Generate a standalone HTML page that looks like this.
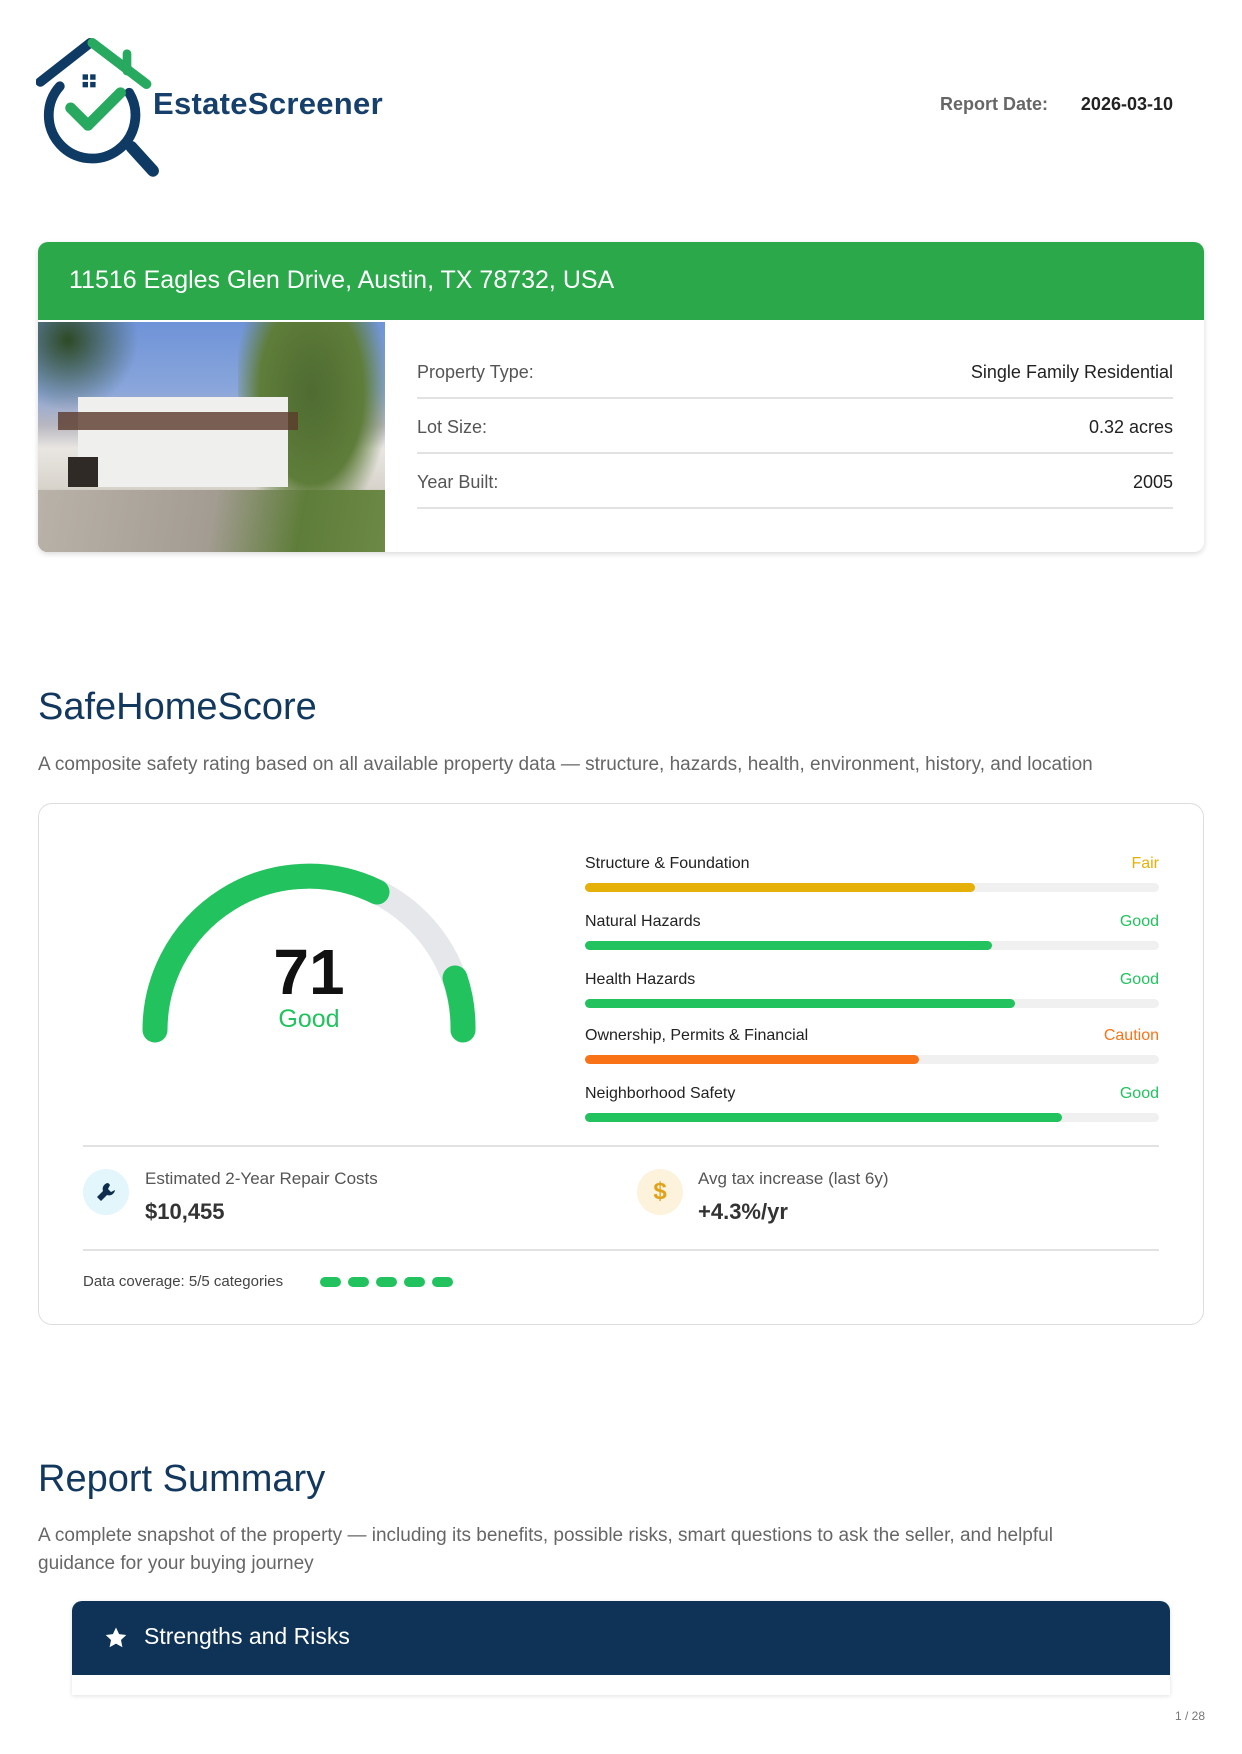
<!DOCTYPE html>
<html><head><meta charset="utf-8"><style>
*{margin:0;padding:0;box-sizing:border-box}
body{width:1242px;height:1754px;background:#fff;font-family:"Liberation Sans","DejaVu Sans",sans-serif;position:relative;overflow:hidden;color:#222}
.abs{position:absolute}
.row{position:absolute;left:417px;width:756px;height:55px;border-bottom:2px solid #e2e2e2;font-size:18px;color:#555}
.row span{position:absolute;bottom:14px}
.row .v{right:0;color:#222}
.lbl{position:absolute;left:585px;width:574px;font-size:16px;color:#222}
.lbl b{position:absolute;right:0;font-weight:normal}
.bar{position:absolute;left:585px;width:574px;height:9px;border-radius:5px;background:#f0f0f0}
.bar i{display:block;height:9px;border-radius:5px}
.dot{position:absolute;top:1277px;width:21px;height:10px;border-radius:5px;background:#22c35e}
</style></head><body>

<svg class="abs" style="left:36px;top:38px" width="130" height="142" viewBox="0 0 120 130">
 <path d="M4 40 L50 4" stroke="#0f3a63" stroke-width="9" stroke-linecap="round" fill="none"/>
 <path d="M52 4 L102 42" stroke="#27a95f" stroke-width="9" stroke-linecap="round" fill="none"/>
 <path d="M84 14 L84 30" stroke="#27a95f" stroke-width="8" stroke-linecap="round"/>
 <rect x="43" y="33" width="5" height="5" fill="#0f3a63"/><rect x="50" y="33" width="5" height="5" fill="#0f3a63"/>
 <rect x="43" y="40" width="5" height="5" fill="#0f3a63"/><rect x="50" y="40" width="5" height="5" fill="#0f3a63"/>
 <path d="M22 44 A40 40 0 1 0 86 50" stroke="#0f3a63" stroke-width="9" fill="none" stroke-linecap="round"/>
 <path d="M88 100 L108 122" stroke="#0f3a63" stroke-width="11" stroke-linecap="round"/>
 <path d="M32 64 L48 80 L78 50" stroke="#27a95f" stroke-width="10" fill="none" stroke-linecap="round" stroke-linejoin="round"/>
</svg>
<div class="abs" style="left:153px;top:86px;font-size:31px;font-weight:bold;color:#16406b;letter-spacing:0.3px">EstateScreener</div>
<div class="abs" style="left:940px;top:94px;font-size:18px;font-weight:bold;color:#666">Report Date:</div>
<div class="abs" style="right:69px;top:94px;font-size:18px;font-weight:bold;color:#222">2026-03-10</div>

<div class="abs" style="left:38px;top:242px;width:1166px;height:310px;border-radius:10px;box-shadow:0 2px 6px rgba(0,0,0,.15);background:#fff;overflow:hidden">
 <div style="height:78px;background:#2aa84a;color:#fff;font-size:25px;padding:24px 0 0 31px">11516 Eagles Glen Drive, Austin, TX 78732, USA</div>
 <div style="position:absolute;left:0;top:80px;width:347px;height:230px;background:linear-gradient(180deg,#6f93d8 0%,#8aa6db 30%,#b9b7c0 45%,#e9e6e2 55%,#d8d4cc 72%,#9a958b 82%,#6e7a5a 100%)">
  <div style="position:absolute;left:0;top:0;width:100px;height:90px;background:radial-gradient(circle at 30% 20%,#2e4a25,transparent 70%)"></div>
  <div style="position:absolute;left:200px;top:0;width:147px;height:200px;background:radial-gradient(ellipse at 50% 35%,#4f6b32 0%,#5f7d3a 50%,transparent 75%)"></div>
  <div style="position:absolute;left:40px;top:75px;width:210px;height:90px;background:#efefee"></div>
  <div style="position:absolute;left:20px;top:90px;width:240px;height:18px;background:#5b3b2c;opacity:.8"></div>
  <div style="position:absolute;left:30px;top:135px;width:30px;height:30px;background:#2f2a26"></div>
  <div style="position:absolute;left:0;top:168px;width:347px;height:62px;background:linear-gradient(100deg,#b9b2a8 0%,#a39c92 50%,#5f7d3a 75%,#6c8a45 100%)"></div>
 </div>
</div>
<div class="row" style="top:344px"><span>Property Type:</span><span class="v">Single Family Residential</span></div>
<div class="row" style="top:399px"><span>Lot Size:</span><span class="v">0.32 acres</span></div>
<div class="row" style="top:454px"><span>Year Built:</span><span class="v">2005</span></div>

<div class="abs" style="left:38px;top:686px;font-size:38px;color:#12385e">SafeHomeScore</div>
<div class="abs" style="left:38px;top:754px;font-size:19px;color:#666">A composite safety rating based on all available property data — structure, hazards, health, environment, history, and location</div>

<div class="abs" style="left:38px;top:803px;width:1166px;height:522px;border:1.5px solid #ddd;border-radius:14px"></div>
<svg class="abs" style="left:130px;top:850px" width="360" height="200" viewBox="130 850 360 200">
 <path d="M155 1030 A154 154 0 0 1 463 1030" stroke="#e5e7eb" stroke-width="25" fill="none" stroke-linecap="round"/>
 <path d="M155 1030 A154 154 0 0 1 377 892" stroke="#22c35e" stroke-width="25" fill="none" stroke-linecap="round"/>
 <path d="M455 978 A154 154 0 0 1 463 1030" stroke="#22c35e" stroke-width="25" fill="none" stroke-linecap="round"/>
</svg>
<div class="abs" style="left:209px;width:200px;text-align:center;top:935px;font-size:64px;font-weight:bold;color:#111">71</div>
<div class="abs" style="left:209px;width:200px;text-align:center;top:1005px;font-size:25px;color:#22c35e">Good</div>

<div class="lbl" style="top:855px">Structure &amp; Foundation<b style="color:#e5b008">Fair</b></div>
<div class="bar" style="top:883px"><i style="width:390px;background:#e5b008"></i></div>
<div class="lbl" style="top:913px">Natural Hazards<b style="color:#22c35e">Good</b></div>
<div class="bar" style="top:941px"><i style="width:407px;background:#22c35e"></i></div>
<div class="lbl" style="top:971px">Health Hazards<b style="color:#22c35e">Good</b></div>
<div class="bar" style="top:999px"><i style="width:430px;background:#22c35e"></i></div>
<div class="lbl" style="top:1027px">Ownership, Permits &amp; Financial<b style="color:#f97316">Caution</b></div>
<div class="bar" style="top:1055px"><i style="width:334px;background:#f97316"></i></div>
<div class="lbl" style="top:1085px">Neighborhood Safety<b style="color:#22c35e">Good</b></div>
<div class="bar" style="top:1113px"><i style="width:477px;background:#22c35e"></i></div>

<div class="abs" style="left:83px;top:1145px;width:1076px;height:2px;background:#e2e2e2"></div>
<div class="abs" style="left:83px;top:1169px;width:46px;height:46px;border-radius:50%;background:#e2f6fb"></div>
<svg class="abs" style="left:94px;top:1180px" width="24" height="24" viewBox="0 0 24 24"><path d="M14 3a6 6 0 0 0-5 8l-6 6 2 2-0 0 2 2 6-6a6 6 0 0 0 8-5l-4 2-3-3 2-4a6 6 0 0 0-2-2z" fill="#0f2e4e"/></svg>
<div class="abs" style="left:145px;top:1169px;font-size:17px;color:#555">Estimated 2-Year Repair Costs</div>
<div class="abs" style="left:145px;top:1199px;font-size:22px;font-weight:bold;color:#333">$10,455</div>
<div class="abs" style="left:637px;top:1169px;width:46px;height:46px;border-radius:50%;background:#fdf3dc;text-align:center;line-height:46px;font-size:24px;font-weight:bold;color:#e0a21a">$</div>
<div class="abs" style="left:698px;top:1169px;font-size:17px;color:#555">Avg tax increase (last 6y)</div>
<div class="abs" style="left:698px;top:1199px;font-size:22px;font-weight:bold;color:#333">+4.3%/yr</div>
<div class="abs" style="left:83px;top:1249px;width:1076px;height:2px;background:#e2e2e2"></div>
<div class="abs" style="left:83px;top:1273px;font-size:15px;color:#444">Data coverage: 5/5 categories</div>
<div class="dot" style="left:320px"></div><div class="dot" style="left:348px"></div><div class="dot" style="left:376px"></div><div class="dot" style="left:404px"></div><div class="dot" style="left:432px"></div>

<div class="abs" style="left:38px;top:1458px;font-size:38px;color:#12385e">Report Summary</div>
<div class="abs" style="left:38px;top:1522px;width:1075px;font-size:19px;line-height:28px;color:#666">A complete snapshot of the property — including its benefits, possible risks, smart questions to ask the seller, and helpful guidance for your buying journey</div>

<div class="abs" style="left:72px;top:1601px;width:1098px;height:94px;border-radius:10px 10px 0 0;box-shadow:0 1px 5px rgba(0,0,0,.12);background:#fff;overflow:hidden">
 <div style="height:74px;background:#0e3356;color:#fff;font-size:23px;padding:22px 0 0 72px">Strengths and Risks</div>
</div>
<svg class="abs" style="left:104px;top:1626px" width="24" height="24" viewBox="0 0 24 24"><path d="M12 1.5l3.1 6.6 7.2.9-5.3 5 1.4 7.2L12 17.6l-6.4 3.6L7 14l-5.3-5 7.2-.9z" fill="#fff"/></svg>
<div class="abs" style="left:1175px;top:1709px;font-size:12px;color:#777">1 / 28</div>
</body></html>
